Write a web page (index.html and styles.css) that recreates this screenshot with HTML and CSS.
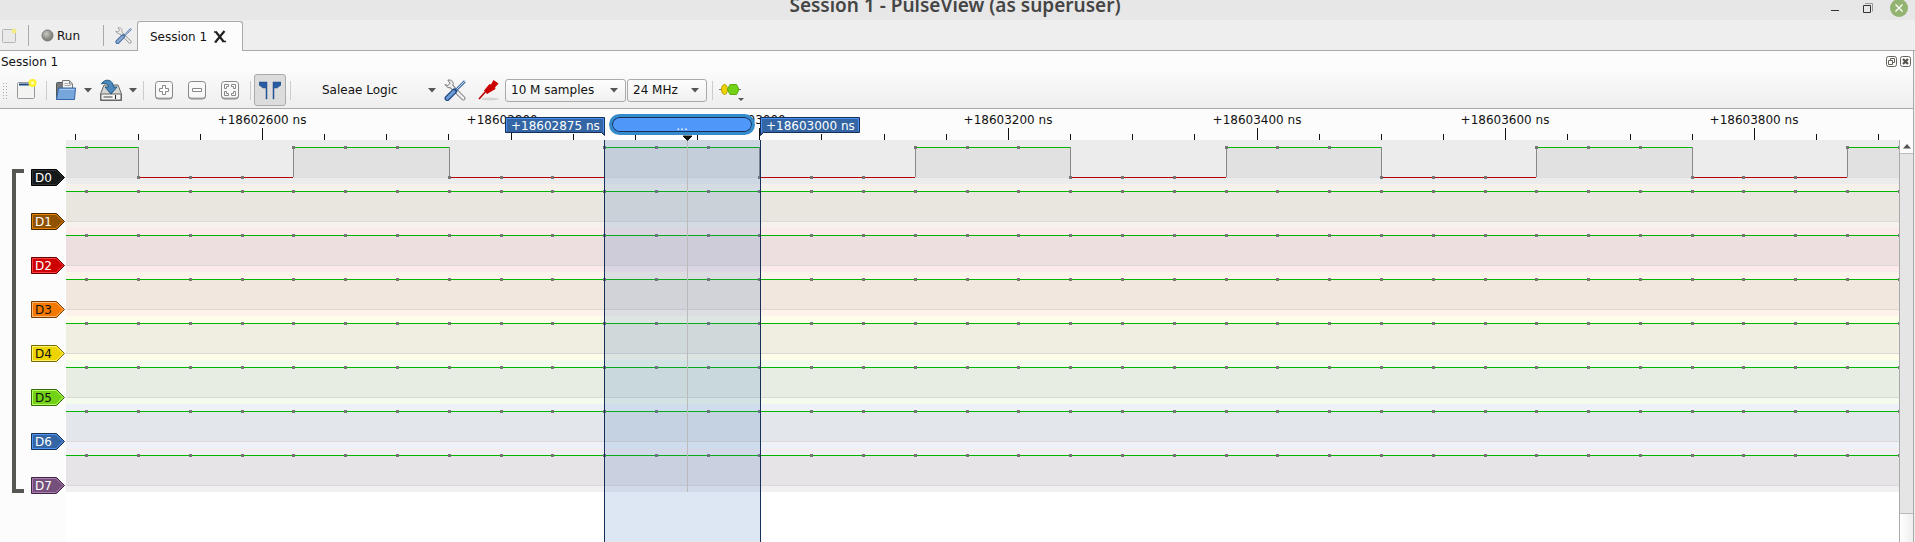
FILE: index.html
```html
<!DOCTYPE html>
<html lang="en">
<head>
<meta charset="utf-8">
<title>Session 1 - PulseView (as superuser)</title>
<link rel="stylesheet" href="styles.css">
</head>
<body>
<div class="window">
  <header class="titlebar">
    <span class="spacer"></span>
    <h1 class="title">Session 1 - PulseView (as superuser)</h1>
    <div class="window-buttons">
      <button class="plain" aria-label="Minimize"><svg width="18" height="20"><path d="M5 12.500h8" stroke="#333" fill="none"/></svg></button>
      <button class="plain" aria-label="Maximize"><svg width="18" height="20"><path d="M7 5.500h7.500v8" stroke="#999" fill="none"/><path d="M5.500 7.500h7v7h-7z" stroke="#333" fill="none"/></svg></button>
      <button class="plain" aria-label="Close"><svg width="18" height="20"><circle cx="9" cy="10" r="9" fill="#92b372"/><path d="M5.500 6.500l7 7m0-7l-7 7" stroke="#fff" stroke-width="1.300"/></svg></button>
    </div>
  </header>

  <nav class="tabs">
    <button class="plain new-session" aria-label="New Session"><svg width="16" height="16"><rect x=".5" y="1.500" width="13" height="13" rx="1" fill="#e9e9e9" stroke="#b5b5b5"/><circle cx="12" cy="3" r="2.500" fill="#f3eb87"/></svg></button>
    <span class="rule"></span>
    <button class="plain run"><svg width="13" height="13"><defs><radialGradient id="ball" cx=".4" cy=".35"><stop offset="0" stop-color="#c9cac6"/><stop offset="1" stop-color="#84867f"/></radialGradient></defs><circle cx="6.500" cy="6.500" r="5.500" fill="url(#ball)" stroke="#777972"/></svg>Run</button>
    <span class="rule"></span>
    <button class="plain settings" aria-label="Settings"><svg width="17" height="17" viewBox="0 0 20 20" opacity=".8"><use href="#tools"/></svg></button>
    <button class="plain tab">Session 1<svg width="14" height="14"><path d="M3 2l7.500 9.500M11.500 1L2.500 12" stroke="#222" stroke-width="2.200" fill="none"/><path d="M1 2h3M9.500 11.500h3.500M1.500 12h2" stroke="#222" stroke-width="1.500"/></svg></button>
  </nav>

  <main class="dock">
    <header class="dock-title">
      <h2>Session 1</h2>
      <button class="plain" aria-label="Float"><svg width="12" height="12"><rect x=".5" y=".5" width="10" height="10" rx="2" fill="none" stroke="#66625c"/><path d="M4.500 4V2.500h4v4H7M2.500 4.500h4v4h-4z" fill="none" stroke="#66625c"/></svg></button>
      <button class="plain" aria-label="Close session"><svg width="12" height="12"><rect x=".5" y=".5" width="10" height="10" rx="2" fill="none" stroke="#66625c"/><path d="M3 3l5 5m0-5L3 8" stroke="#55514c" stroke-width="2.200"/></svg></button>
    </header>

    <div class="toolbar">
      <span class="grip"></span>
      <button class="plain i-new" aria-label="New View"><svg width="20" height="22"><rect x=".5" y="3.500" width="17" height="16" rx="1" fill="#f3f3f2" stroke="#999"/><path d="M2 5.500h11" stroke="#204a87" stroke-width="2"/><circle cx="15.500" cy="4" r="4" fill="#fcf22b"/><circle cx="15.500" cy="4" r="1.800" fill="#fffdb0"/></svg></button>
      <span class="sep"></span>
      <button class="plain i-open" aria-label="Open"><svg width="22" height="22"><path d="M1.500 20.500V4.500q0-1 1-1h5l1 2h9v15z" fill="#77797a" stroke="#555753"/><path d="M7.500 12V1.500h7l3 3.500V12z" fill="#f2f2f2" stroke="#777"/><path d="M14.500 1.500V5h3" fill="none" stroke="#888"/><path d="M9.500 4.500h4m-4 2h6" stroke="#aaa"/><path d="M1.500 20.500l2-11.500h17l-1 11.500z" fill="#77a6dc" stroke="#3465a4"/><path d="M4.500 10.500h15" stroke="#a6c7ea"/></svg></button>
      <button class="plain i-arrow" aria-label="Open menu"><svg width="8" height="5"><path d="M0 0h8L4 4.500z" fill="#555"/></svg></button>
      <button class="plain i-save" aria-label="Save"><svg width="24" height="23"><path d="M5 6h14l3.500 9v6.500h-21V15z" fill="#d4d5d2" stroke="#666"/><rect x="2" y="15" width="20" height="6" rx="1" fill="#f4f4f2" stroke="#666"/><path d="M4.500 18h9" stroke="#999" stroke-width="2"/><path d="M16.500 16v4" stroke="#222"/><path d="M2.500 5C5-.5 14-.5 14.500 8H18l-6 7-6-7h3.500C9 4.500 6 3.500 2.500 5z" fill="#4d89bd" stroke="#225b86"/></svg></button>
      <button class="plain i-arrow" aria-label="Save menu"><svg width="8" height="5"><path d="M0 0h8L4 4.500z" fill="#555"/></svg></button>
      <span class="sep"></span>
      <button class="plain i-zoom" aria-label="Zoom In"><svg width="18" height="19"><use href="#key"/><path d="M7.500 4.500h3v3h3v3h-3v3h-3v-3h-3v-3h3z" fill="#fff" stroke="#888"/></svg></button>
      <button class="plain i-zoom" aria-label="Zoom Out"><svg width="18" height="19"><use href="#key"/><path d="M4.500 7.500h9v3h-9z" fill="#fff" stroke="#888"/></svg></button>
      <button class="plain i-zoom" aria-label="Zoom to Fit"><svg width="18" height="19"><use href="#key"/><path d="M3.500 7.500v-4h4v2h-2v2zM10.500 3.500h4v4h-2v-2h-2zM3.500 10.500v4h4v-2h-2v-2zM14.500 10.500v4h-4v-2h2v-2z" fill="#fff" stroke="#888"/></svg></button>
      <span class="sep"></span>
      <button class="plain cursors" aria-label="Show Cursors" aria-pressed="true"><svg width="22" height="19"><path d="M0 1h8v17H7V7H4L0 4zM22 1h-8v17h1V7h3l4-3z" fill="#2a5ca3" stroke="#204a87" stroke-width=".5"/></svg></button>
      <span class="sep"></span>
      <label class="device"><select aria-label="Device"><option>Saleae Logic</option></select><svg width="8" height="5"><path d="M0 0h8L4 4.500z" fill="#555"/></svg></label>
      <button class="plain i-tools" aria-label="Configure Device"><svg width="22" height="22" viewBox="0 0 20 20"><use href="#tools"/></svg></button>
      <button class="plain i-probe" aria-label="Configure Channels"><svg width="22" height="22"><ellipse cx="12" cy="20" rx="9" ry="1.500" fill="#000" opacity=".12"/><path d="M1 20l8-9" stroke="#b00" stroke-width="1.600"/><path d="M6 11.500L11.500 5l1.500.500L15.500 1l5 3.500-3.500 4 .500 1.500L9 15z" fill="#c00"/></svg></button>
      <label class="combo samples"><select aria-label="Samples"><option>10 M samples</option></select><svg width="8" height="5"><path d="M0 0h8L4 4.500z" fill="#555"/></svg></label>
      <label class="combo rate"><select aria-label="Sample rate"><option>24 MHz</option></select><svg width="8" height="5"><path d="M0 0h8L4 4.500z" fill="#555"/></svg></label>
      <span class="sep"></span>
      <button class="plain i-decoder" aria-label="Add Decoder"><svg width="25" height="24"><path d="M0 11.500h22" stroke="#777"/><ellipse cx="5.500" cy="11.500" rx="3" ry="5" fill="#edd400" stroke="#b89b00"/><path d="M11 6.500h6.500l2.500 5-2.500 5H11l-2.500-5z" fill="#73d216" stroke="#5cab10"/><path d="M19 20h6l-3 3z" fill="#555"/></svg></button>
    </div>

    <div class="view">
      <div class="channels">
        <div class="group-bar"></div>
        <ul class="labels" id="labels"></ul>
      </div>
      <div class="traces" id="traces">
        <svg class="ruler" id="ruler" role="img" aria-label="Time ruler"></svg>
        <svg class="lanes" id="lanes" role="img" aria-label="Logic traces"></svg>
        <div class="cursor-range"></div>
        <svg class="hover" width="11" height="358"><path d="M1 1h9l-4.500 4.500z" fill="#111" stroke="#111"/><path d="M5.500 6v351" stroke="#bbb"/></svg>
        <svg class="flag-left" width="100" height="20"><path d="M.5.500h99v18l-3-3H.5z" fill="#3465a4" stroke="#17305a"/><path d="M1.500 14.500v-13h97v14" stroke="#4a90f5" fill="none"/><text x="6" y="13">+18602875 ns</text></svg>
        <div class="span-pill">...</div>
        <svg class="flag-right" width="100" height="20"><path d="M.5.500h99v15H3.500l-3 3z" fill="#3465a4" stroke="#17305a"/><path d="M1.500 15.500v-14h97v13" stroke="#4a90f5" fill="none"/><text x="6" y="13">+18603000 ns</text></svg>
      </div>
      <div class="scrollbar">
        <button class="plain scroll-up" aria-label="Scroll up"><svg width="8" height="5"><path d="M0 4.500h8L4 0z" fill="#555"/></svg></button>
        <div class="thumb"></div>
        <div class="track"></div>
      </div>
    </div>
  </main>
</div>

<svg class="symbols" aria-hidden="true">
  <defs>
    <g id="tools">
      <path d="M6 6l11.500 11.500" stroke="#777" stroke-width="4" stroke-linecap="round"/>
      <path d="M3.500 1c3-.8 6 2 4.500 5S2.500 8.500 1 5l2.500 1 2-2z" fill="#eee" stroke="#777" stroke-width=".9"/>
      <path d="M6 6l11.500 11.500" stroke="#eee" stroke-width="2.400" stroke-linecap="round"/>
      <path d="M19 2l-9 9" stroke="#3465a4" stroke-width="2.400"/>
      <path d="M19 2l-9 9" stroke="#dbe6f3" stroke-width=".9"/>
      <path d="M9.500 11L3 17.500" stroke="#204a87" stroke-width="5" stroke-linecap="round"/>
      <path d="M9 11.500L3 17.500" stroke="#6d9bd1" stroke-width="2.800" stroke-linecap="round"/>
    </g>
    <g id="key">
      <rect x=".5" y=".5" width="17" height="17.500" rx="3" fill="#aaa" stroke="#888"/>
      <rect x="1" y="1" width="16" height="15.500" rx="2.500" fill="#f8f8f8"/>
    </g>
  </defs>
</svg>
<script src="view.js"></script>
</body>
</html>
```

FILE: styles.css
```css
* { box-sizing: border-box; }
body { margin: 0; background: #eee; color: #111; font: 12px/16px "DejaVu Sans", sans-serif; }
.window { display: flex; flex-direction: column; height: 100vh; overflow: hidden; }
.plain { display: flex; align-items: center; justify-content: center; margin: 0; padding: 0; border: 0; background: none; color: inherit; font: inherit; }
svg { display: block; flex: none; }
.symbols { position: absolute; width: 0; height: 0; }

.titlebar { display: grid; grid-template-columns: 1fr auto 1fr; flex: none; height: 20px; background: #e7e7e7; overflow: hidden; }
.title { margin: 0; padding-right: 5px; height: 20px; font: 600 19px/10px "Noto Sans", sans-serif; color: #454545; }
.window-buttons { display: flex; justify-content: flex-end; gap: 14px; padding-right: 7px; margin-top: -5px; }

.tabs { display: flex; align-items: center; flex: none; height: 31px; padding-top: 1px; border-bottom: 1px solid #aaa; }
.new-session { width: 28px; justify-content: flex-start; padding-left: 2px; }
.rule { width: 1px; height: 21px; background: #aaa; }
.run { width: 74px; gap: 3px; justify-content: flex-start; padding-left: 12px; }
.settings { width: 33px; padding-left: 5px; }
.tab { gap: 6px; align-self: stretch; height: 31px; width: 106px; padding-right: 3px; border: 1px solid #aaa; border-bottom: 0; border-radius: 3px 3px 0 0; background: #fcfcfc; }

.dock { display: flex; flex-direction: column; flex: 1; min-height: 0; margin-right: 2px; background: #fcfcfc; box-shadow: 1px 0 #aaa; }
.dock-title { display: flex; align-items: center; flex: none; gap: 2px; height: 20px; padding: 2px 1px 0; }
.dock-title h2 { flex: 1; margin: 0; font: inherit; }
.toolbar { display: flex; align-items: center; flex: none; height: 38px; padding-top: 1px; border-bottom: 1px solid #aaa; background: linear-gradient(#fbfbfb, #eee); }
.grip { width: 5px; height: 17px; margin-left: 2px; background: radial-gradient(circle, #aaa 1px, transparent 1px) 0 0 / 3px 3px; }
.sep { width: 1px; height: 19px; background: #ccc; }
.i-new { width: 39px; }
.i-open { width: 37px; }
.i-arrow { width: 8px; }
.i-save { width: 37px; }
.i-arrow + .sep { margin-left: 6px; }
.i-zoom { width: 33px; }
.sep + .i-zoom { margin-left: 3px; }
.i-zoom + .sep { margin-left: 4px; }
.cursors { width: 32px; height: 32px; margin: 0 4px 0 3px; border: 1px solid #aaa; border-radius: 3px; background: #dcdcdc; }
select { flex: 1; min-width: 0; padding: 0; border: 0; background: none; appearance: none; color: inherit; font: inherit; outline: 0; }
.device { display: flex; align-items: center; width: 114px; margin-left: 31px; }
.i-tools { width: 38px; }
.i-probe { width: 30px; margin-right: 1px; }
.combo { display: flex; align-items: center; height: 23px; margin-right: 1px; padding: 0 7px 0 5px; border: 1px solid #aaa; border-radius: 3px; background: linear-gradient(#fefefe, #f0f0f0); }
.samples { width: 121px; }
.rate { width: 80px; }
.rate + .sep { margin-left: 4px; }
.i-decoder { width: 38px; padding-right: 1px; }

.view { display: flex; flex: 1; min-height: 0; }
.channels { display: flex; flex: none; width: 66px; padding-top: 60px; }
.group-bar { flex: none; width: 12px; height: 324px; margin: 0 7px 0 12px; border: 4px solid #555753; border-right: 0; }
.labels { margin: 0; padding: 0; list-style: none; }
.labels li { height: 44px; }
.labels text { font: 12px "DejaVu Sans", sans-serif; }
.traces { position: relative; display: flex; flex-direction: column; flex: 1; min-width: 0; overflow: hidden; background: linear-gradient(#fcfcfc 31px, #fff 31px); }
.ruler { width: 100%; height: 31px; }
.lanes { width: 100%; height: 352px; }
.ruler text { font: 12px "DejaVu Sans", sans-serif; fill: #111; text-anchor: middle; }
.flag-left text, .flag-right text { font: 12px "DejaVu Sans", sans-serif; fill: #fff; }
.cursor-range { position: absolute; left: 538px; top: 31px; bottom: 0; width: 157px; border: solid #17305a; border-width: 0 1px; background: rgba(52, 112, 184, .17); }
.hover { position: absolute; left: 616px; top: 26px; }
.flag-left { position: absolute; left: 439px; top: 8px; }
.flag-right { position: absolute; left: 694px; top: 8px; }
.span-pill { position: absolute; left: 543px; top: 5px; width: 146px; height: 21px; border: 3px solid #338bcc; border-radius: 11px; background: #4f97f8; box-shadow: inset 0 0 0 1px #17305a; color: #fff; text-align: center; line-height: 18px; }

.scrollbar { display: flex; flex-direction: column; flex: none; width: 14px; margin-top: 31px; border-left: 1px solid #aaa; background: #fcfcfc; }
.scroll-up { height: 13px; }
.thumb { flex: 372; border: solid #bbb; border-width: 1px 0; background: #e5e5e5; }
.track { flex: 29; background: linear-gradient(90deg, #fff, #eee); }
```

FILE: view.js
```js
const ROW = 44;
const HIGH = 7;
const LOW = 37;
const EDGE = 73;
const SAMPLE = 51.79;
const TICK = 62.17;
const WIDTH = document.getElementById("traces").clientWidth;

const channels = [
  { name: "D0", color: "#16191a", light: "#2e3436", dark: "#000", text: "#fff", band: "#ececec", fill: "#e1e1e1" },
  { name: "D1", color: "#8f5202", light: "#e58403", dark: "#472901", text: "#fff", band: "#f6f1eb", fill: "#e9e6e0" },
  { name: "D2", color: "#cc0000", light: "#ff4040", dark: "#660000", text: "#fff", band: "#fceaea", fill: "#eddfdf" },
  { name: "D3", color: "#f57900", light: "#ffb56e", dark: "#7a3c00", text: "#111", band: "#fef3ea", fill: "#f1e7df" },
  { name: "D4", color: "#edd400", light: "#fff36b", dark: "#766a00", text: "#111", band: "#fefdea", fill: "#f0eee0" },
  { name: "D5", color: "#73d216", light: "#b2ff64", dark: "#39690b", text: "#111", band: "#f3fbec", fill: "#e7ede2" },
  { name: "D6", color: "#3465a4", light: "#4f97f8", dark: "#1a3252", text: "#fff", band: "#eef2f8", fill: "#e3e6ea" },
  { name: "D7", color: "#75507b", light: "#b07ab9", dark: "#3a283d", text: "#fff", band: "#f2eff3", fill: "#e7e4e7" }
];

document.getElementById("labels").innerHTML = channels.map(c => `
  <li><svg width="35" height="17">
    <path d="M.5.500h25l8 8-8 8H.5z" fill="${c.color}" stroke="${c.dark}"/>
    <path d="M1.500 1.500h23.500l7 7-7 7H1.500z" fill="none" stroke="${c.light}"/>
    <text x="4" y="13" fill="${c.text}">${c.name}</text>
  </svg></li>`).join("");

const rect = (x, y, w, h, fill) => `<rect x="${x}" y="${y}" width="${w}" height="${h}" fill="${fill}"/>`;

let ruler = "";
for (let i = 0; i * TICK < WIDTH; i++) {
  const x = Math.round(9.4 + i * TICK);
  const major = i % 4 === 3;
  ruler += rect(x, major ? 19 : 25, 1, major ? 12 : 6, "#111");
  if (major) {
    ruler += `<text x="${x}" y="15">+${18602600 + (i - 3) * 50} ns</text>`;
  }
}
document.getElementById("ruler").innerHTML = ruler;

let lanes = "";
channels.forEach((c, row) => {
  const top = row * ROW;
  lanes += rect(0, top, WIDTH, ROW, c.band);
  if (row === 0) {
    lanes += rect(0, top + LOW, WIDTH, 1, "#ddd");
    for (let i = -1; i * SAMPLE * 3 < WIDTH; i++) {
      const x = Math.round(EDGE - 1 + i * SAMPLE * 3);
      const next = Math.round(EDGE - 1 + (i + 1) * SAMPLE * 3);
      if (i % 2) {
        lanes += rect(x, top + HIGH, next - x, LOW - HIGH, c.fill);
        lanes += rect(x, top + HIGH, next - x, 1, "#00b400");
      } else {
        lanes += rect(x, top + LOW, next - x, 1, "#b40000");
      }
      lanes += rect(x, top + HIGH, 1, LOW - HIGH, "#888");
    }
  } else {
    lanes += rect(0, top + HIGH, WIDTH, LOW - HIGH, c.fill);
    lanes += rect(0, top + LOW, WIDTH, 1, "#ddd9d9");
    lanes += rect(0, top + HIGH, WIDTH, 1, "#00b400");
  }
  for (let i = -1; i * SAMPLE < WIDTH; i++) {
    const low = row === 0 && Math.floor(i / 3) % 2 === 0;
    lanes += rect(Math.round(EDGE - 2 + i * SAMPLE), top + (low ? LOW : HIGH) - 1, 3, 3, "#777");
  }
});
document.getElementById("lanes").innerHTML = lanes;
```
